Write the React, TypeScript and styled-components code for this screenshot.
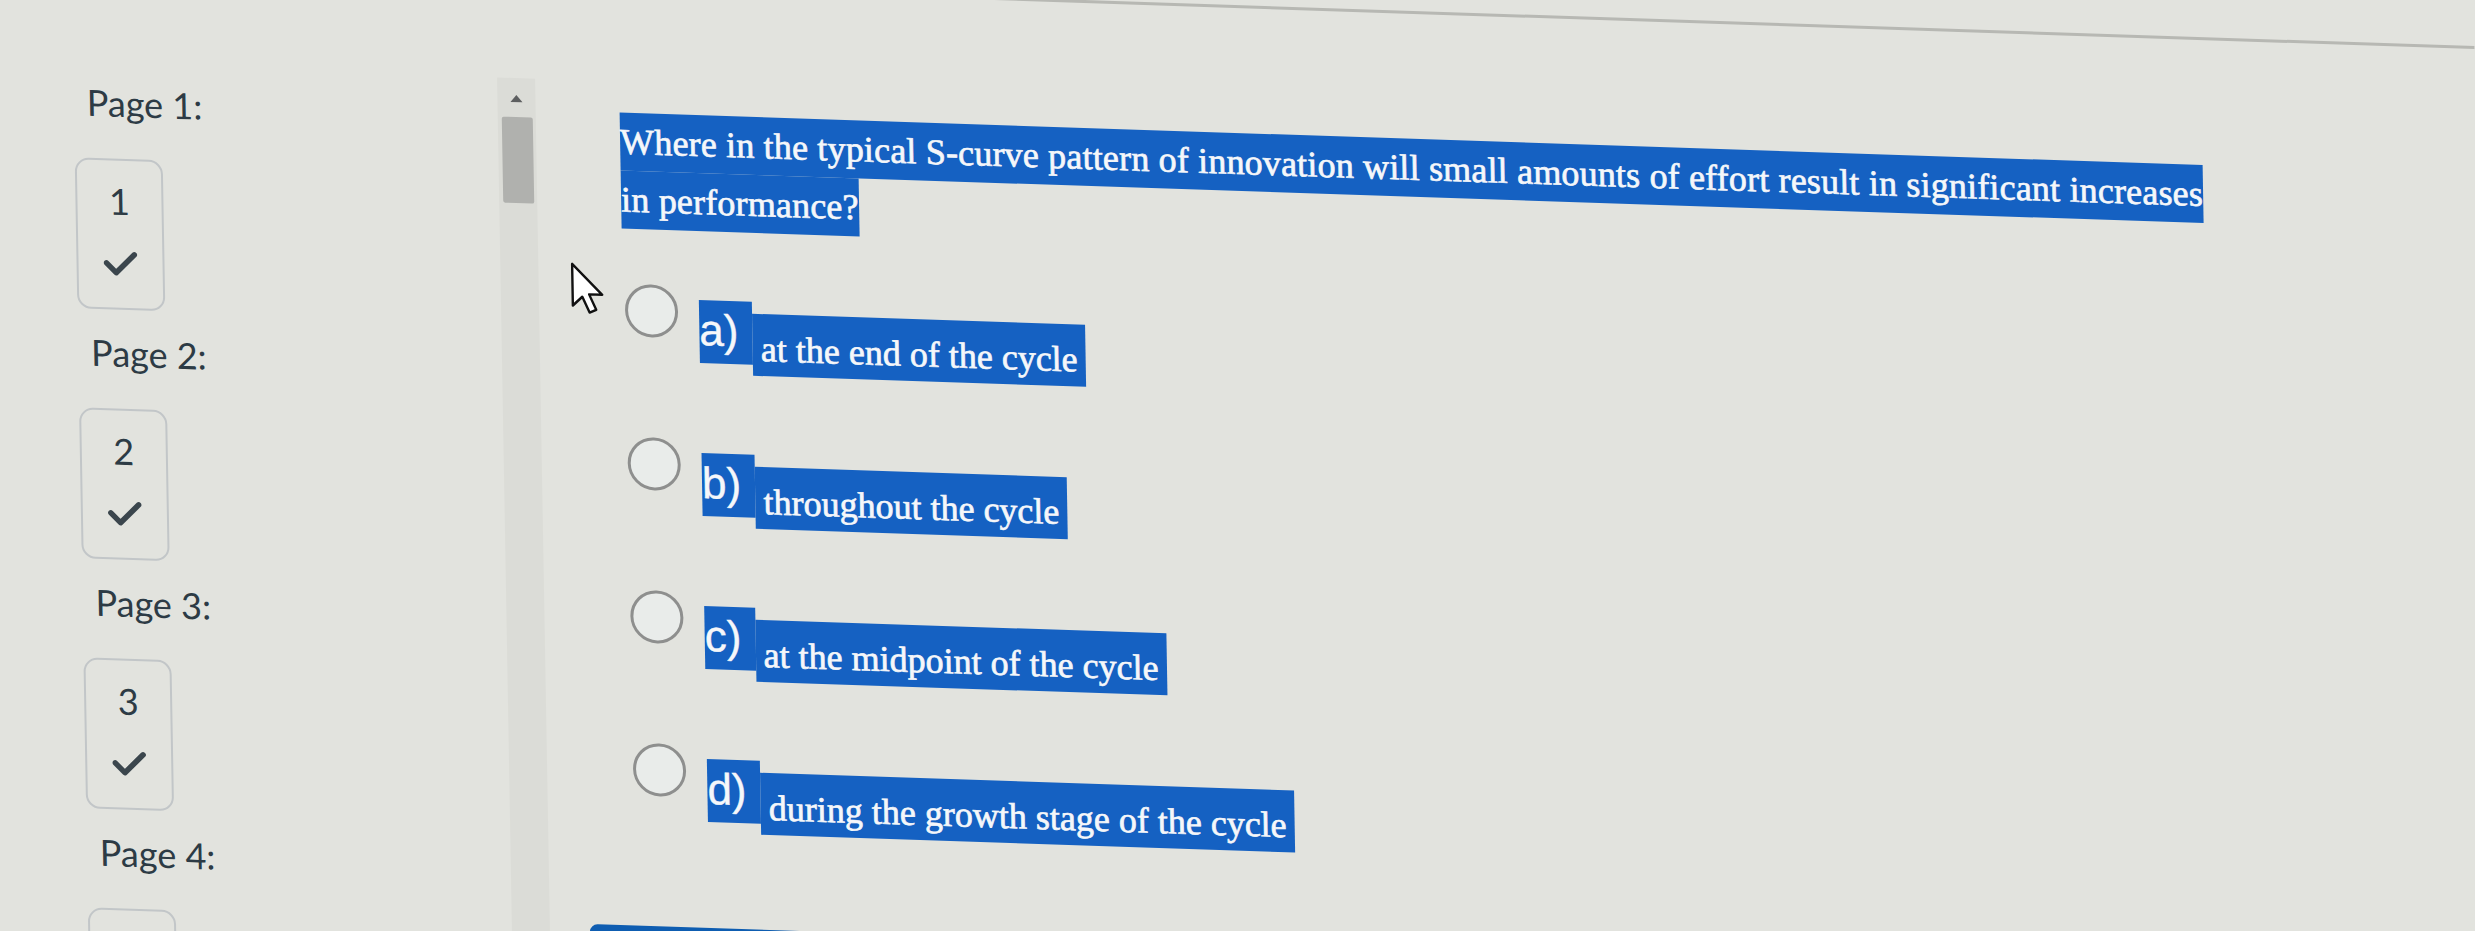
import React from "react";
import styled, { createGlobalStyle } from "styled-components";

const Global = createGlobalStyle`
  html, body {
    margin: 0;
    padding: 0;
    overflow: hidden;
    background: #e2e3de;
  }
  body {
    width: 2475px;
    height: 931px;
  }
  #root {
    width: 2475px;
    height: 931px;
    overflow: hidden;
  }
`;

/* the photo of the screen is slightly skewed: lines fall to the right */
const Photo = styled.div`
  width: 2475px;
  height: 1040px;
  display: flex;
  flex-direction: column;
  transform-origin: 0 0;
  transform: skew(1deg, 1.9deg);
`;

const HeaderRule = styled.div`
  flex-shrink: 0;
  height: 3px;
  background: #b7b8b3;
  margin: -36px 0 33px;
`;

const Layout = styled.div`
  display: flex;
  flex: 1;
`;

const Sidebar = styled.nav`
  width: 496px;
  flex-shrink: 0;
  box-sizing: border-box;
  padding: 78px 0 0 72px;
  display: flex;
  flex-direction: column;
  align-items: flex-start;
  font-family: Lato, "Noto Sans", sans-serif;
  color: #2d3b45;
`;

const PageLabel = styled.div`
  font-size: 36px;
  line-height: 43px;
  padding-left: 13px;
  margin-bottom: 34px;
`;

const PageBox = styled.div`
  flex-shrink: 0;
  box-sizing: border-box;
  width: 88px;
  height: 151px;
  border: 2px solid #c2c6c8;
  border-radius: 14px;
  display: flex;
  flex-direction: column;
  align-items: center;
  padding-top: 19px;
  margin-bottom: 22px;
  font-size: 36px;
  line-height: 43px;
  color: #2d3b45;
`;

const CheckMark = styled.svg`
  margin-top: 28px;
  width: 34px;
  height: 26px;
`;

const ScrollTrack = styled.div`
  width: 38px;
  flex-shrink: 0;
  margin-top: 61px;
  background: #dbdcd7;
  display: flex;
  flex-direction: column;
  align-items: center;
`;

const ScrollArrow = styled.div`
  height: 39px;
  width: 100%;
  display: flex;
  justify-content: center;
  padding-top: 17px;
  box-sizing: border-box;
  &::before {
    content: "";
    width: 0;
    height: 0;
    border-left: 6px solid transparent;
    border-right: 6px solid transparent;
    border-bottom: 7px solid #5d5f60;
  }
`;

const ScrollThumb = styled.div`
  width: 31px;
  height: 86px;
  background: #b0b1ae;
  border-radius: 2px;
`;

const Main = styled.main`
  position: relative;
  flex: 1;
  box-sizing: border-box;
  padding: 92px 0 0 84px;
  display: flex;
  flex-direction: column;
  align-items: flex-start;
`;

const Cursor = styled.svg`
  position: absolute;
  left: 32px;
  top: 243px;
  width: 37px;
  height: 54px;
`;

const Question = styled.div`
  width: 1600px;
  font-family: "Liberation Serif", "Times New Roman", serif;
  font-size: 36px;
  line-height: 58px;
  letter-spacing: 0.18px;
  color: #f5f7fa;
  -webkit-text-stroke: 0.7px #f5f7fa;
`;

const Highlight = styled.span`
  background: #1561c2;
  padding: 9px 0;
  -webkit-box-decoration-break: clone;
  box-decoration-break: clone;
`;

const OptionList = styled.div`
  margin: 55px 0 0 2px;
  display: flex;
  flex-direction: column;
  gap: 65px;
`;

const OptionRow = styled.label`
  display: flex;
  align-items: flex-start;
  height: 88px;
`;

const Radio = styled.span`
  flex-shrink: 0;
  box-sizing: border-box;
  width: 53px;
  height: 53px;
  border: 3px solid #8e8f8e;
  border-radius: 50%;
  background: #e9ecea;
  margin-right: 21px;
`;

const OptionLetter = styled.span`
  margin-top: 14px;
  height: 63px;
  padding-right: 14px;
  background: #1561c2;
  color: #f5f7fa;
  font-family: "Liberation Sans", Arial, sans-serif;
  font-size: 44px;
  line-height: 60px;
  -webkit-text-stroke: 0.4px #f5f7fa;
`;

const OptionText = styled.span`
  margin-top: 26px;
  padding: 14px 8px 6px;
  background: #1561c2;
  color: #f5f7fa;
  font-family: "Liberation Serif", "Times New Roman", serif;
  font-size: 36px;
  line-height: 42px;
  white-space: nowrap;
  -webkit-text-stroke: 0.7px #f5f7fa;
`;

const NextButton = styled.button`
  margin: 95px 0 0 -44px;
  width: 270px;
  height: 60px;
  border: none;
  border-radius: 8px;
  background: #0e5db1;
`;

/* page 4's box is only partly in view: its number and check are below the edge */
const pages = [
  { n: 1, done: true, inView: true },
  { n: 2, done: true, inView: true },
  { n: 3, done: true, inView: true },
  { n: 4, done: false, inView: false },
];

const options = [
  { letter: "a)", text: "at the end of the cycle" },
  { letter: "b)", text: "throughout the cycle" },
  { letter: "c)", text: "at the midpoint of the cycle" },
  { letter: "d)", text: "during the growth stage of the cycle" },
];

function Check() {
  return (
    <CheckMark viewBox="0 0 34 26" fill="none">
      <polyline
        points="3,12.5 12.5,22 31,3.5"
        stroke="#3b464d"
        strokeWidth="5.5"
        strokeLinecap="round"
        strokeLinejoin="round"
      />
    </CheckMark>
  );
}

export default function App() {
  return (
    <>
      <Global />
      <Photo>
        <HeaderRule />
        <Layout>
          <Sidebar>
            {pages.map((p) => (
              <React.Fragment key={p.n}>
                <PageLabel>Page {p.n}:</PageLabel>
                <PageBox aria-label={`Page ${p.n}`}>
                  {p.inView && <span>{p.n}</span>}
                  {p.done && <Check />}
                </PageBox>
              </React.Fragment>
            ))}
          </Sidebar>
          <ScrollTrack>
            <ScrollArrow />
            <ScrollThumb />
          </ScrollTrack>
          <Main>
            <Cursor viewBox="0 0 20 29">
              <path
                d="M1 1 L1 23.5 L6.2 18.6 L10 27 L13.6 25.4 L9.9 17.2 L17 17.2 Z"
                fill="#ffffff"
                stroke="#111111"
                strokeWidth="1.3"
                strokeLinejoin="round"
              />
            </Cursor>
            <Question>
              <Highlight>
                Where in the typical S-curve pattern of innovation will small
                amounts of effort result in significant increases in
                performance?
              </Highlight>
            </Question>
            <OptionList>
              {options.map((o) => (
                <OptionRow key={o.letter}>
                  <Radio />
                  <OptionLetter>{o.letter}</OptionLetter>
                  <OptionText>{o.text}</OptionText>
                </OptionRow>
              ))}
            </OptionList>
            <NextButton aria-label="Next" />
          </Main>
        </Layout>
      </Photo>
    </>
  );
}
